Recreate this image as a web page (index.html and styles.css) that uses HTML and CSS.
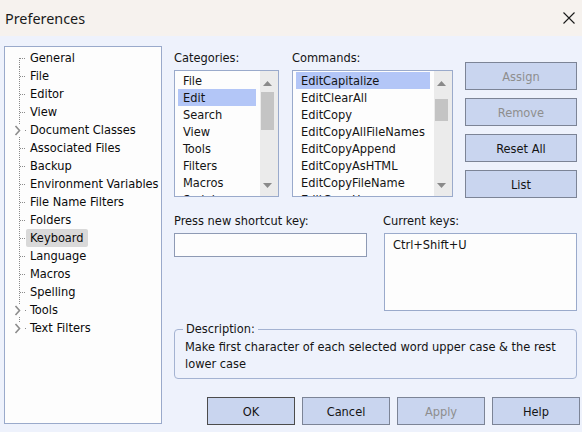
FILE: index.html
```html
<!DOCTYPE html>
<html>
<head>
<meta charset="utf-8">
<link rel="stylesheet" href="styles.css">
</head>
<body>
<div class="titlebar">
  <span class="title">Preferences</span>
  <svg class="close" width="12" height="12" viewBox="0 0 12 12"><path d="M0.5 0.5 L11.5 11.5 M11.5 0.5 L0.5 11.5" stroke="#1a1a1a" stroke-width="1.1" fill="none"/></svg>
</div>
<div class="main">
  <div class="tree">
    <div class="node"><svg class="lead" width="21" height="18"><path d="M14.5 9 V18 M15 9.5 H21" class="dots"/></svg><span class="lbl">General</span></div>
    <div class="node"><svg class="lead" width="21" height="18"><path d="M14.5 0 V18 M15 9.5 H21" class="dots"/></svg><span class="lbl">File</span></div>
    <div class="node"><svg class="lead" width="21" height="18"><path d="M14.5 0 V18 M15 9.5 H21" class="dots"/></svg><span class="lbl">Editor</span></div>
    <div class="node"><svg class="lead" width="21" height="18"><path d="M14.5 0 V18 M15 9.5 H21" class="dots"/></svg><span class="lbl">View</span></div>
    <div class="node"><svg class="lead" width="21" height="18"><path d="M14.5 0 V3 M14.5 16 V18 M20 9.5 H21" class="dots"/><path d="M10.5 5 L14.5 9.5 L10.5 14" class="chev"/></svg><span class="lbl">Document Classes</span></div>
    <div class="node"><svg class="lead" width="21" height="18"><path d="M14.5 0 V18 M15 9.5 H21" class="dots"/></svg><span class="lbl">Associated Files</span></div>
    <div class="node"><svg class="lead" width="21" height="18"><path d="M14.5 0 V18 M15 9.5 H21" class="dots"/></svg><span class="lbl">Backup</span></div>
    <div class="node"><svg class="lead" width="21" height="18"><path d="M14.5 0 V18 M15 9.5 H21" class="dots"/></svg><span class="lbl">Environment Variables</span></div>
    <div class="node"><svg class="lead" width="21" height="18"><path d="M14.5 0 V18 M15 9.5 H21" class="dots"/></svg><span class="lbl">File Name Filters</span></div>
    <div class="node"><svg class="lead" width="21" height="18"><path d="M14.5 0 V18 M15 9.5 H21" class="dots"/></svg><span class="lbl">Folders</span></div>
    <div class="node"><svg class="lead" width="21" height="18"><path d="M14.5 0 V18 M15 9.5 H21" class="dots"/></svg><span class="lbl sel">Keyboard</span></div>
    <div class="node"><svg class="lead" width="21" height="18"><path d="M14.5 0 V18 M15 9.5 H21" class="dots"/></svg><span class="lbl">Language</span></div>
    <div class="node"><svg class="lead" width="21" height="18"><path d="M14.5 0 V18 M15 9.5 H21" class="dots"/></svg><span class="lbl">Macros</span></div>
    <div class="node"><svg class="lead" width="21" height="18"><path d="M14.5 0 V18 M15 9.5 H21" class="dots"/></svg><span class="lbl">Spelling</span></div>
    <div class="node"><svg class="lead" width="21" height="18"><path d="M14.5 0 V3 M14.5 16 V18 M20 9.5 H21" class="dots"/><path d="M10.5 5 L14.5 9.5 L10.5 14" class="chev"/></svg><span class="lbl">Tools</span></div>
    <div class="node"><svg class="lead" width="21" height="18"><path d="M14.5 0 V3 M20 9.5 H21" class="dots"/><path d="M10.5 5 L14.5 9.5 L10.5 14" class="chev"/></svg><span class="lbl">Text Filters</span></div>
  </div>

  <div class="right">
    <div class="row1">
      <div class="col col-cat">
        <div class="label">Categories:</div>
        <div class="listbox">
          <div class="items">
            <div class="item">File</div>
            <div class="item on">Edit</div>
            <div class="item">Search</div>
            <div class="item">View</div>
            <div class="item">Tools</div>
            <div class="item">Filters</div>
            <div class="item">Macros</div>
            <div class="item">Scripts</div>
          </div>
          <div class="sbar">
            <svg class="arr" width="9" height="5"><path d="M0 5 L4.5 0 L9 5 Z" fill="#8a8a8a"/></svg>
            <div class="thumb thumb-cat"></div>
            <svg class="arr down" width="9" height="5"><path d="M0 0 L4.5 5 L9 0 Z" fill="#8a8a8a"/></svg>
          </div>
        </div>
      </div>
      <div class="col col-cmd">
        <div class="label">Commands:</div>
        <div class="listbox">
          <div class="items">
            <div class="item on">EditCapitalize</div>
            <div class="item">EditClearAll</div>
            <div class="item">EditCopy</div>
            <div class="item">EditCopyAllFileNames</div>
            <div class="item">EditCopyAppend</div>
            <div class="item">EditCopyAsHTML</div>
            <div class="item">EditCopyFileName</div>
            <div class="item">EditCopyHex</div>
          </div>
          <div class="sbar">
            <svg class="arr" width="9" height="5"><path d="M0 5 L4.5 0 L9 5 Z" fill="#8a8a8a"/></svg>
            <div class="thumb thumb-cmd"></div>
            <svg class="arr down" width="9" height="5"><path d="M0 0 L4.5 5 L9 0 Z" fill="#8a8a8a"/></svg>
          </div>
        </div>
      </div>
      <div class="btncol">
        <button class="btn dis">Assign</button>
        <button class="btn dis">Remove</button>
        <button class="btn">Reset All</button>
        <button class="btn">List</button>
      </div>
    </div>

    <div class="row2">
      <div class="col col-press">
        <div class="label">Press new shortcut key:</div>
        <div class="field"></div>
      </div>
      <div class="col col-keys">
        <div class="label">Current keys:</div>
        <div class="keys"><div class="keyline">Ctrl+Shift+U</div></div>
      </div>
    </div>

    <fieldset class="desc">
      <legend>Description:</legend>
      <p>Make first character of each selected word upper case &amp; the rest lower case</p>
    </fieldset>

    <div class="actions">
      <button class="btn wide def">OK</button>
      <button class="btn wide">Cancel</button>
      <button class="btn wide dis">Apply</button>
      <button class="btn wide">Help</button>
    </div>
  </div>
</div>
</body>
</html>
```
FILE: styles.css
```css
* { box-sizing: border-box; }
html, body { margin: 0; padding: 0; }
body {
  width: 582px;
  height: 432px;
  overflow: hidden;
  background: #eef2fc;
  font-family: "DejaVu Sans Condensed", "DejaVu Sans", sans-serif;
  font-size: 12.7px;
  color: #141414;
}
.titlebar {
  height: 36px;
  background: #f6f2ee;
  display: flex;
  align-items: center;
  justify-content: space-between;
  padding: 0 7px 0 5px;
}
.title {
  font-family: "Noto Sans", "DejaVu Sans", sans-serif;
  font-size: 14.4px;
  color: #1a1a1a;
}
.close { display: block; }

.main {
  display: flex;
  padding: 10px 0 0 4px;
  gap: 12px;
}
.tree {
  width: 158px;
  height: 378px;
  flex: none;
  border: 1px solid #9aaacb;
  background: #fdfdfd;
  padding-top: 2px;
}
.node {
  height: 18px;
  display: flex;
  align-items: center;
}
.lead { display: block; flex: none; }
.dots { stroke: #8a8a8a; stroke-width: 1; stroke-dasharray: 1 1; fill: none; }
.chev { stroke: #8c8c8c; stroke-width: 1.6; fill: none; }
.lbl {
  padding: 0 4px;
  height: 18px;
  line-height: 18px;
  color: #0a0a0a;
  border-radius: 2px;
  white-space: nowrap;
}
.lbl.sel { background: #d9d9d9; }

.right {
  width: 403px;
  display: flex;
  flex-direction: column;
}
.label {
  line-height: 16px;
  margin: 4px 0 4px;
  white-space: nowrap;
}
.row1 { display: flex; }
.col-cat { width: 105px; margin-right: 13px; }
.col-cmd { width: 161px; margin-right: 12px; }
.listbox {
  height: 127px;
  border: 1px solid #9aaacb;
  background: #fdfdfd;
  display: flex;
  overflow: hidden;
}
.items {
  flex: 1;
  padding: 1px 4px 0 3px;
  overflow: hidden;
}
.item {
  height: 17px;
  line-height: 18px;
  padding-left: 5px;
  white-space: nowrap;
}
.item.on { background: #b3c6f7; }
.sbar {
  width: 18px;
  flex: none;
  background: #ebebeb;
  display: flex;
  flex-direction: column;
  align-items: flex-start;
  padding-left: 3px;
}
.arr { display: block; margin-top: 10px; }
.arr.down { margin-top: auto; margin-bottom: 8px; }
.thumb {
  width: 13px;
  margin-left: -2px;
  background: #c4c4c4;
}
.thumb-cat { margin-top: 6px; height: 38px; }
.thumb-cmd { margin-top: 13px; height: 22px; }

.btncol {
  width: 112px;
  padding-top: 16px;
  display: flex;
  flex-direction: column;
  gap: 8px;
}
.btn {
  height: 28px;
  background: #c9d5ef;
  border: 1px solid #7c8496;
  font-family: inherit;
  font-size: 12.7px;
  color: #141414;
  padding: 0;
  margin: 0;
}
.btn.dis { color: #8e8e8e; }
.btn.def { border-color: #4c4c4c; }

.row2 { display: flex; margin-top: 11px; }
.col-press { width: 193px; margin-right: 17px; }
.col-keys { width: 193px; }
.col-keys .label { margin-left: -1px; }
.field {
  height: 24px;
  border: 1px solid #8e9ab4;
  background: #fdfdfd;
}
.keys {
  height: 78px;
  border: 1px solid #9aaacb;
  background: #fdfdfd;
  padding: 2px 8px;
}
.keyline { line-height: 17px; }

.desc {
  margin: 10px 0 0;
  padding: 0 8px 6px 10px;
  border: 1px solid #a4b3d2;
  border-radius: 4px;
  min-width: 0;
}
.desc legend {
  padding: 0 3px;
  margin-left: -2px;
  line-height: 16px;
}
.desc p {
  margin: 1px 0 0;
  line-height: 17px;
}

.actions {
  display: flex;
  gap: 7px;
  margin-top: 18px;
  padding-left: 33px;
  width: 406px;
}
.btn.wide { width: 88px; flex: none; }
```
